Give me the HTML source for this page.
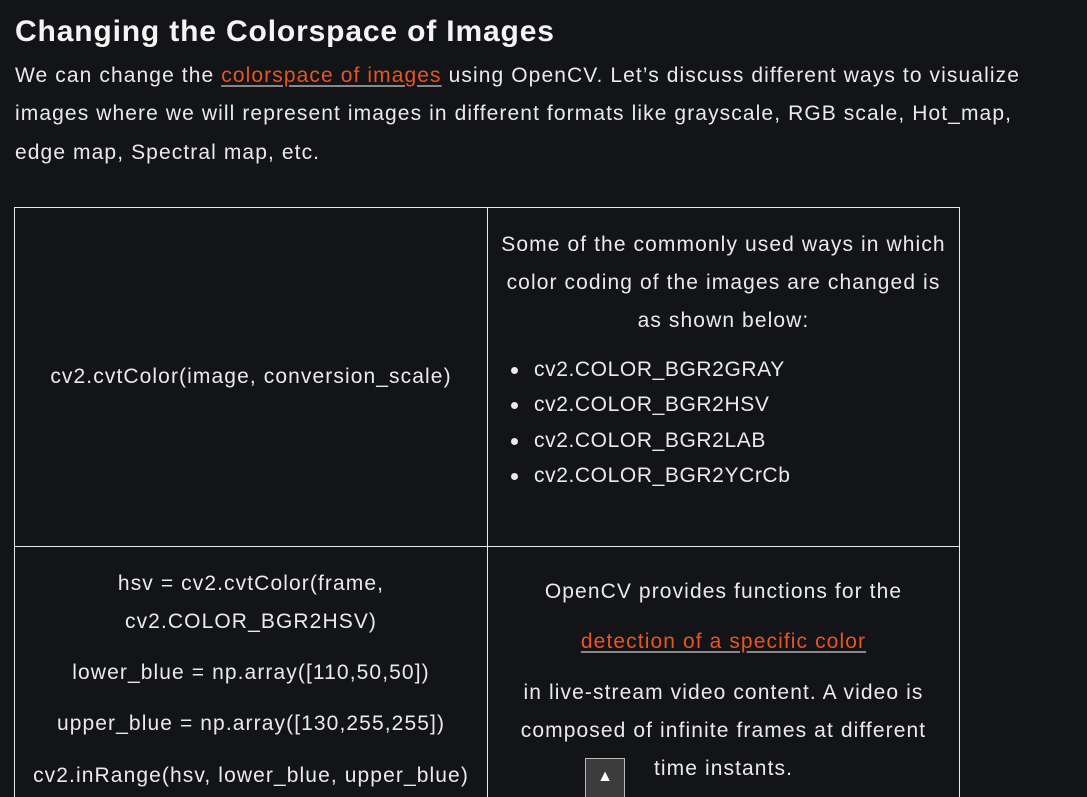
<!DOCTYPE html>
<html><head><meta charset="utf-8"><style>
html,body{margin:0;padding:0;background:#131417;width:1087px;height:797px;overflow:hidden;}
body{font-family:"Liberation Sans",sans-serif;color:#eaeaea;position:relative;}
.l{position:absolute;white-space:nowrap;font-size:21px;line-height:24px;letter-spacing:1.1px;}
.li{letter-spacing:0.6px;}
.c1{left:15px;width:472px;text-align:center;}
.c2{left:488px;width:471px;text-align:center;}
a{color:#e9541f;text-decoration:underline;text-decoration-color:#888;text-underline-offset:3px;}
.b{position:absolute;background:#e8e8e8;}
.dot{position:absolute;width:7px;height:7px;border-radius:50%;background:#eaeaea;}
</style></head><body>
<div class="l" style="left:15px;top:14px;font-size:30px;line-height:36px;font-weight:bold;color:#f4f4f4;letter-spacing:0.85px;">Changing the Colorspace of Images</div>
<div class="l" style="left:15px;top:64px;">We can change the <a>colorspace of images</a> using OpenCV. Let’s discuss different ways to visualize</div>
<div class="l" style="left:15px;top:102px;">images where we will represent images in different formats like grayscale, RGB scale, Hot_map,</div>
<div class="l" style="left:15px;top:141px;">edge map, Spectral map, etc.</div>

<div class="b" style="left:14px;top:207px;width:946px;height:1px;"></div>
<div class="b" style="left:14px;top:546px;width:946px;height:1px;"></div>
<div class="b" style="left:14px;top:207px;width:1px;height:590px;"></div>
<div class="b" style="left:487px;top:207px;width:1px;height:590px;"></div>
<div class="b" style="left:959px;top:207px;width:1px;height:590px;"></div>

<div class="l c1" style="top:365px;">cv2.cvtColor(image, conversion_scale)</div>
<div class="l c2" style="top:233px;">Some of the commonly used ways in which</div>
<div class="l c2" style="top:271px;">color coding of the images are changed is</div>
<div class="l c2" style="top:309px;">as shown below:</div>
<div class="dot" style="left:511px;top:367px;"></div>
<div class="l li" style="left:534px;top:358px;">cv2.COLOR_BGR2GRAY</div>
<div class="dot" style="left:511px;top:402px;"></div>
<div class="l li" style="left:534px;top:393px;">cv2.COLOR_BGR2HSV</div>
<div class="dot" style="left:511px;top:438px;"></div>
<div class="l li" style="left:534px;top:429px;">cv2.COLOR_BGR2LAB</div>
<div class="dot" style="left:511px;top:473px;"></div>
<div class="l li" style="left:534px;top:464px;">cv2.COLOR_BGR2YCrCb</div>

<div class="l c1" style="top:572px;">hsv = cv2.cvtColor(frame,</div>
<div class="l c1" style="top:610px;">cv2.COLOR_BGR2HSV)</div>
<div class="l c1" style="top:661px;">lower_blue = np.array([110,50,50])</div>
<div class="l c1" style="top:712px;">upper_blue = np.array([130,255,255])</div>
<div class="l c1" style="top:764px;">cv2.inRange(hsv, lower_blue, upper_blue)</div>

<div class="l c2" style="top:580px;">OpenCV provides functions for the</div>
<div class="l c2" style="top:630px;"><a>detection of a specific color</a></div>
<div class="l c2" style="top:681px;">in live-stream video content. A video is</div>
<div class="l c2" style="top:719px;">composed of infinite frames at different</div>
<div class="l c2" style="top:757px;">time instants.</div>

<div style="position:absolute;left:585px;top:758px;width:38px;height:40px;background:#3c3c3c;border:1px solid #bbb;border-bottom:none;color:#fff;font-size:16px;text-align:center;line-height:36px;">▲</div>
</body></html>
